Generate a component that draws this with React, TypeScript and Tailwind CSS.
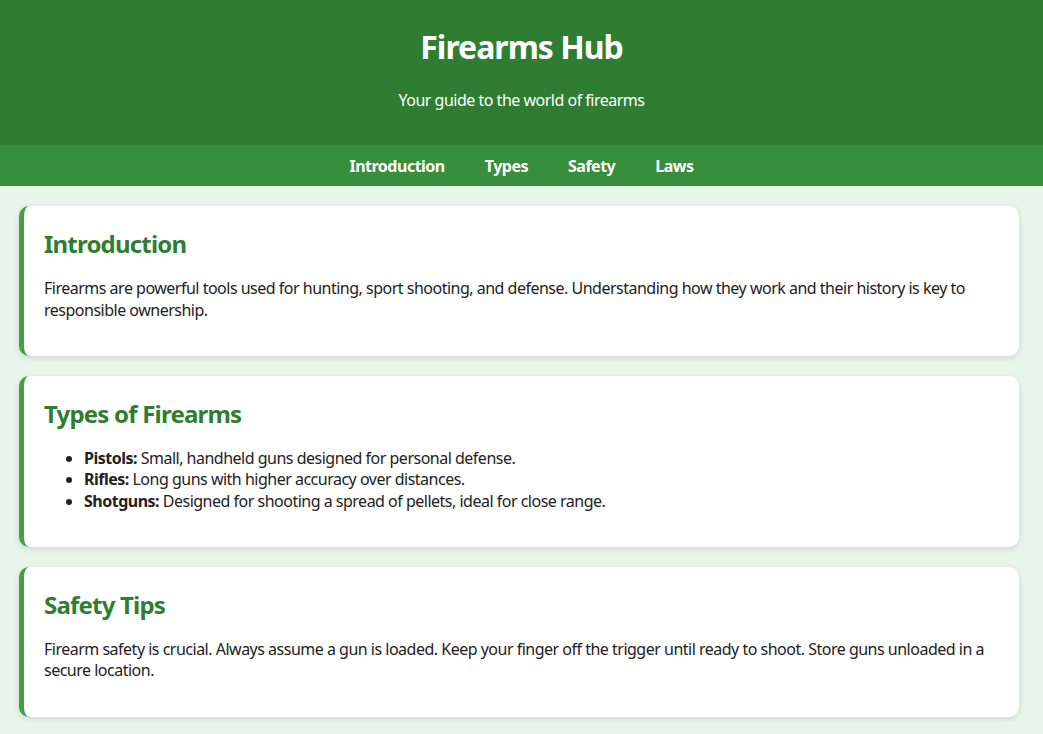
import React from 'react';

const navLinks = ['Introduction', 'Types', 'Safety', 'Laws'];

function Card({ title, children }: { title: string; children: React.ReactNode }) {
  return (
    <section className="bg-white rounded-[10px] border-l-[5px] border-[#43a047] shadow-[0_2px_6px_rgba(0,0,0,0.12)] pt-[22px] pb-[19px] px-5">
      <h2 className="text-[24px] leading-[32px] font-bold tracking-[-0.8px] text-[#2e7d32] mb-[18px]">{title}</h2>
      {children}
    </section>
  );
}

export default function App() {
  return (
    <div className="min-h-screen bg-[#e8f5e9] font-['Noto_Sans',sans-serif] text-[16px] leading-[21.33px] tracking-[-0.5px] text-[#222]">
      <header className="bg-[#2e7d32] text-white text-center pt-[26px] pb-[34px]">
        <h1 className="text-[32px] leading-[42.6px] font-bold tracking-[-1px]">Firearms Hub</h1>
        <p className="mt-[21px]">Your guide to the world of firearms</p>
      </header>
      <nav className="bg-[#388e3c] flex justify-center pt-[11px] pb-[9px]">
        {navLinks.map((l) => (
          <a key={l} href="#" className="text-white font-bold mx-5">
            {l}
          </a>
        ))}
      </nav>
      <main className="pl-[19px] pr-[24px] pt-5 pb-5 flex flex-col gap-5">
        <Card title="Introduction">
          <p className="mb-4">
            Firearms are powerful tools used for hunting, sport shooting, and defense. Understanding how they work and their history is key to responsible ownership.
          </p>
        </Card>
        <Card title="Types of Firearms">
          <ul className="list-disc pl-10 mb-4">
            <li>
              <strong>Pistols:</strong> Small, handheld guns designed for personal defense.
            </li>
            <li>
              <strong>Rifles:</strong> Long guns with higher accuracy over distances.
            </li>
            <li>
              <strong>Shotguns:</strong> Designed for shooting a spread of pellets, ideal for close range.
            </li>
          </ul>
        </Card>
        <Card title="Safety Tips">
          <p className="mb-4">
            Firearm safety is crucial. Always assume a gun is loaded. Keep your finger off the trigger until ready to shoot. Store guns unloaded in a secure location.
          </p>
        </Card>
      </main>
    </div>
  );
}
